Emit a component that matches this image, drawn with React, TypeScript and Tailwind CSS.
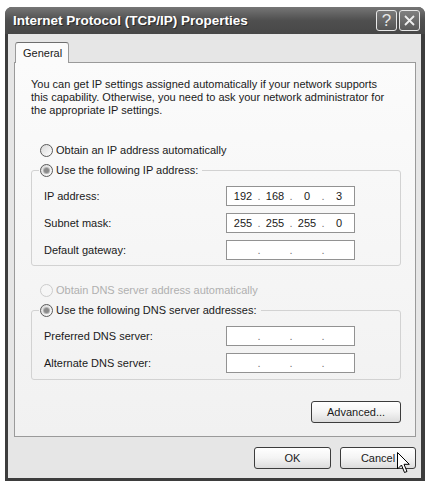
import React from 'react'

const FONT = { fontFamily: '"Liberation Sans", Arial, sans-serif' }

function Radio({ checked, disabled, label }: { checked?: boolean; disabled?: boolean; label: string }) {
  return (
    <span className="flex items-center h-[14px]">
      <span
        className={`w-[13px] h-[13px] rounded-full border flex items-center justify-center ${
          disabled
            ? 'border-[#cccccc] bg-[#f6f6f6]'
            : 'border-[#5a5a5a] bg-linear-to-br from-[#d8d8d8] to-white'
        }`}
      >
        {checked && <span className="w-[5px] h-[5px] rounded-full bg-[#8a8a8a] ring-1 ring-[#b5b5b5]" />}
      </span>
      <span className={`ml-[3px] text-[11px] leading-[14px] ${disabled ? 'text-[#b0b0b0]' : 'text-[#1a1a1a]'}`}>{label}</span>
    </span>
  )
}

function IpBox({ octets }: { octets?: string[] }) {
  const parts = octets ?? ['', '', '', '']
  return (
    <div className="w-[129px] h-[20px] border border-[#929292] bg-white flex items-center pl-[2px] text-[11px] text-[#1a1a1a]">
      {parts.map((p, i) => (
        <React.Fragment key={i}>
          {i > 0 && <span className="w-[4px] text-center text-[#777]">.</span>}
          <span className="w-[28px] text-center">{p}</span>
        </React.Fragment>
      ))}
    </div>
  )
}

function Row({ label, octets }: { label: string; octets?: string[] }) {
  return (
    <div className="flex items-center pl-[12px]">
      <span className="w-[182px] text-[11px] text-[#1a1a1a]">{label}</span>
      <IpBox octets={octets} />
    </div>
  )
}

function Button({ children, w }: { children: React.ReactNode; w: string }) {
  return (
    <button
      className={`${w} h-[22px] rounded-[3px] border border-[#3c3c3c] bg-linear-to-b from-white via-[#f4f4f4] to-[#dcdcdc] text-[11px] text-[#1a1a1a] flex items-center justify-center`}
    >
      {children}
    </button>
  )
}

export default function App() {
  return (
    <div className="relative w-[426px] h-[481px] bg-white pt-[7px] pl-[5px] overflow-hidden" style={FONT}>
      <div className="w-[420px] h-[474px] rounded-t-[7px] bg-[#3d3d3d] flex flex-col pl-[3px] pr-[4px] pb-[3px]">
        {/* Title bar */}
        <div className="h-[27px] -ml-[3px] -mr-[4px] rounded-t-[7px] bg-linear-to-b from-[#767676] via-[#4f4f4f] to-[#474747] flex items-center pl-[8px] pr-[5px]">
          <span
            className="flex-1 text-white font-bold text-[13.5px] leading-none"
            style={{ textShadow: '1px 1px 0 #2a2a2a' }}
          >
            Internet Protocol (TCP/IP) Properties
          </span>
          <div className="flex gap-[2px]">
            <span className="w-[21px] h-[21px] rounded-[3px] border border-[#e8e8e8] bg-linear-to-b from-[#7a7a7a] to-[#555555] flex items-center justify-center text-[#e6e6e6] text-[17px] leading-none">
              ?
            </span>
            <span className="w-[21px] h-[21px] rounded-[3px] border border-[#e8e8e8] bg-linear-to-b from-[#808080] to-[#5a5a5a] flex items-center justify-center">
              <svg width="13" height="13" viewBox="0 0 13 13">
                <path d="M2 2 L11 11 M11 2 L2 11" stroke="#eeeeee" strokeWidth="1.8" />
              </svg>
            </span>
          </div>
        </div>

        {/* Body */}
        <div className="flex-1 bg-[#e6e6e6] pt-[8px] pl-[6px] pr-[5px] flex flex-col">
          <div className="flex pl-[1px]">
            <div className="relative z-10 -mb-px h-[21px] w-[54px] rounded-t-[3px] border border-b-0 border-[#9a9a9a] border-t-[#6e6e6e] bg-[#fbfbfb] flex items-center pl-[7px] text-[11px] text-[#1a1a1a]">
              General
            </div>
          </div>
          <div className="h-[375px] border border-[#9a9a9a] bg-linear-to-b from-[#fbfbfb] to-[#f1f1f1] pt-[15px] pl-[16px]">
            <p className="text-[11px] leading-[13px] text-[#1a1a1a]">
              You can get IP settings assigned automatically if your network supports
              <br />
              this capability. Otherwise, you need to ask your network administrator for
              <br />
              the appropriate IP settings.
            </p>

            <div className="mt-[26px] ml-[9px]">
              <Radio label="Obtain an IP address automatically" />
            </div>

            <fieldset className="mt-[6px] w-[370px] border border-[#d2d2d2] rounded-[3px] pt-[9px] pb-[5px] flex flex-col gap-[7px]">
              <legend className="ml-[7px] pl-[1px] pr-[4px]">
                <Radio checked label="Use the following IP address:" />
              </legend>
              <Row label="IP address:" octets={['192', '168', '0', '3']} />
              <Row label="Subnet mask:" octets={['255', '255', '255', '0']} />
              <Row label="Default gateway:" />
            </fieldset>

            <div className="mt-[17px] ml-[9px]">
              <Radio disabled label="Obtain DNS server address automatically" />
            </div>

            <fieldset className="mt-[6px] w-[370px] border border-[#d2d2d2] rounded-[3px] pt-[9px] pb-[6px] flex flex-col gap-[7px]">
              <legend className="ml-[7px] pl-[1px] pr-[4px]">
                <Radio checked label="Use the following DNS server addresses:" />
              </legend>
              <Row label="Preferred DNS server:" />
              <Row label="Alternate DNS server:" />
            </fieldset>

            <div className="w-[370px] flex justify-end mt-[21px]">
              <Button w="w-[90px]">Advanced...</Button>
            </div>
          </div>

          <div className="flex justify-end gap-[9px] mt-[10px]">
            <Button w="w-[77px]">OK</Button>
            <Button w="w-[76px]">Cancel</Button>
          </div>
        </div>
      </div>

      {/* Mouse pointer */}
      <svg className="absolute left-[397px] top-[452px]" width="14" height="22" viewBox="0 0 14 22">
        <path
          d="M0.5 0.5 L0.5 17 L4.5 13 L7.5 20.5 L10 19.5 L7 12.3 L12.3 12.3 Z"
          fill="white"
          stroke="black"
          strokeWidth="1"
          strokeLinejoin="miter"
        />
      </svg>
    </div>
  )
}
